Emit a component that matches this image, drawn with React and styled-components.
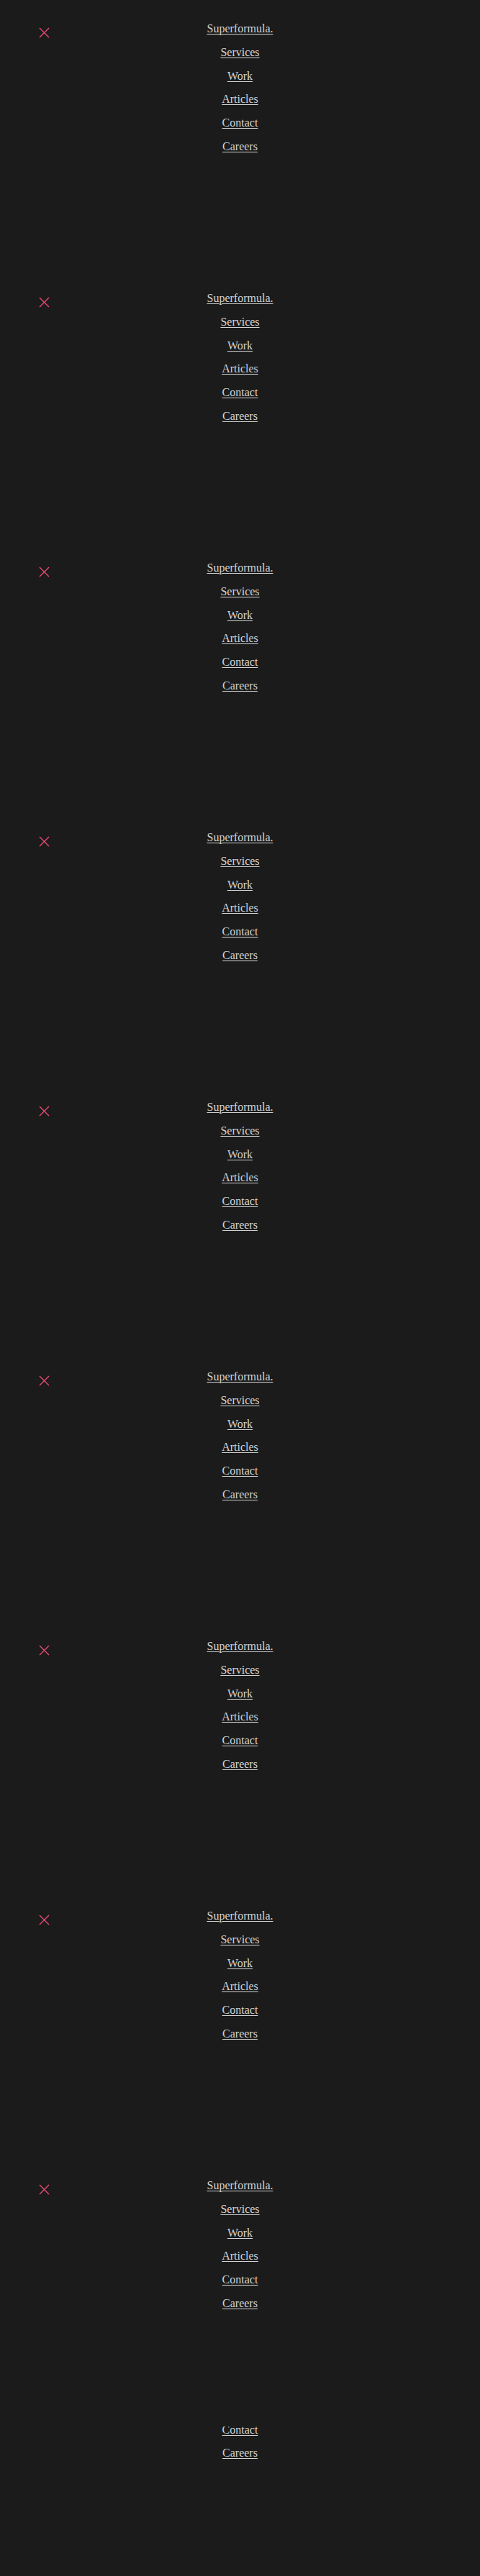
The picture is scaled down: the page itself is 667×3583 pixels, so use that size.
import React from "react";
import styled, { createGlobalStyle } from "styled-components";

const Global = createGlobalStyle`
  html, body {
    margin: 0;
    padding: 0;
    background: #1b1b1b;
  }
  body {
    font-family: "Liberation Serif", "Times New Roman", serif;
    font-size: 16px;
    color: #d2d2d2;
  }
`;

const Page = styled.div`
  display: flex;
  flex-direction: column;
  width: 667px;
  background: #1b1b1b;
`;

const Section = styled.section`
  height: ${(p) => p.$height}px;
  overflow: hidden;
  flex: none;
`;

const Inner = styled.div`
  display: grid;
  grid-template-columns: 1fr auto 1fr;
  align-items: start;
  padding-top: 24px;
  margin-top: ${(p) => p.$shift || 0}px;
`;

const CloseButton = styled.button`
  justify-self: start;
  margin: 13px 0 0 53px;
  padding: 0;
  width: 16px;
  height: 16px;
  border: none;
  background: transparent;
  display: flex;
  align-items: center;
  justify-content: center;
  cursor: pointer;
`;

const Nav = styled.nav`
  display: flex;
  flex-direction: column;
  align-items: center;
`;

const NavLink = styled.a`
  display: block;
  line-height: 32.8px;
  font-size: 16px;
  color: #d2d2d2;
  text-decoration: underline;
  text-underline-offset: 2px;
  text-decoration-thickness: 1px;
`;

const links = ["Superformula.", "Services", "Work", "Articles", "Contact", "Careers"];

function CloseIcon() {
  return (
    <svg width="15" height="15" viewBox="0 0 15 15" fill="none">
      <path d="M1 1L14 14M14 1L1 14" stroke="#ea4a73" strokeWidth="1.4" />
    </svg>
  );
}

function Menu({ height = 375, shift = 0, items = links, showClose = true }) {
  return (
    <Section $height={height}>
      <Inner $shift={shift}>
        {showClose ? (
          <CloseButton aria-label="Close menu">
            <CloseIcon />
          </CloseButton>
        ) : (
          <div />
        )}
        <Nav>
          {items.map((l) => (
            <NavLink key={l} href="#">
              {l}
            </NavLink>
          ))}
        </Nav>
        <div />
      </Inner>
    </Section>
  );
}

export default function App() {
  return (
    <>
      <Global />
      <Page>
        {Array.from({ length: 9 }).map((_, i) => (
          <Menu key={i} />
        ))}
        <Menu height={208} shift={-35.5} items={links.slice(4)} showClose={false} />
      </Page>
    </>
  );
}
